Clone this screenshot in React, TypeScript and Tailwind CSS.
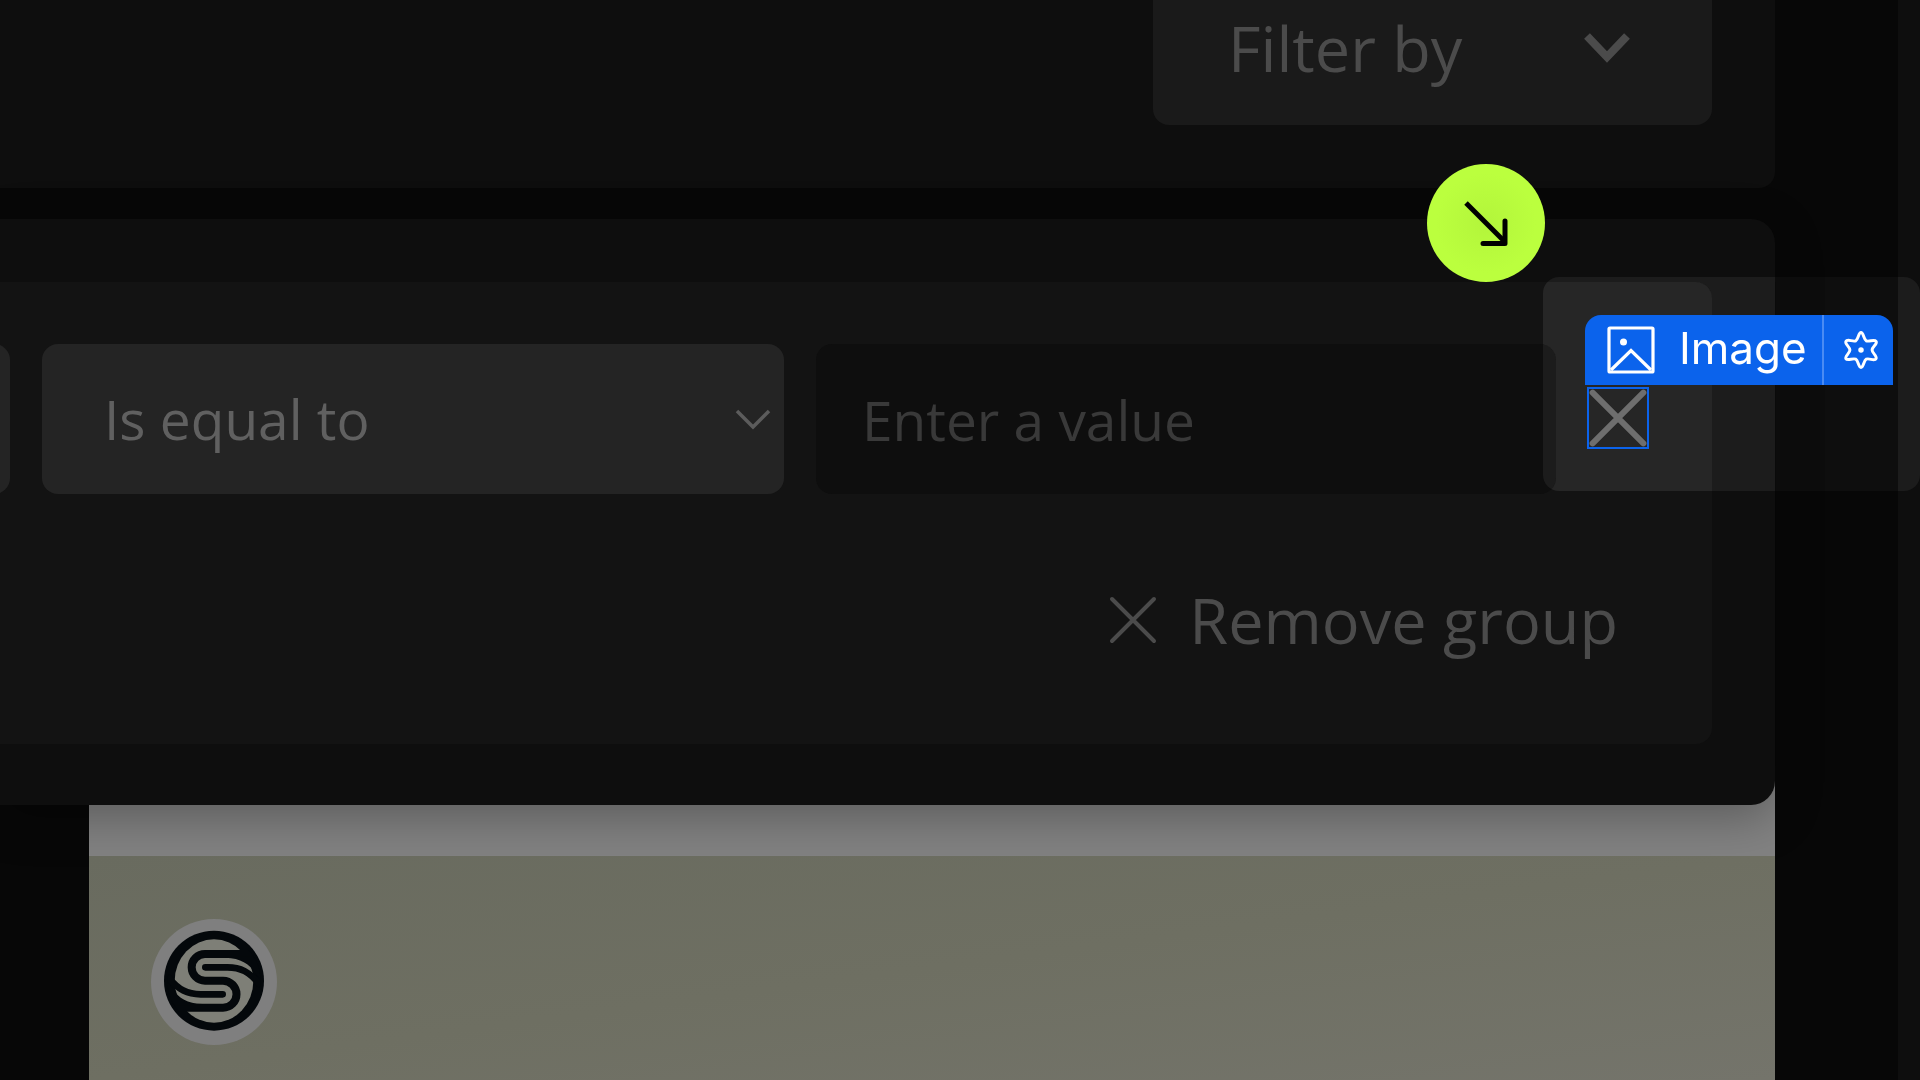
import { useState } from 'react'

const FIELD_CLS = 'h-[150px] w-full rounded-2xl text-[55px] leading-[76px] appearance-none outline-none'

const OPERATORS = [
  { value: 'eq', label: 'Is equal to' },
  { value: 'neq', label: 'Is not equal to' },
]

function Cross({ className, width }: { className: string; width: number }) {
  return (
    <svg viewBox="0 0 48 48" className={className} fill="none" stroke="currentColor" strokeWidth={width} strokeLinecap="round">
      <path d="M3 3 45 45M45 3 3 45" />
    </svg>
  )
}

function Logo() {
  return (
    <svg viewBox="61 56 378 378" className="size-[126px]" role="img" aria-label="Logo">
      <defs>
        <clipPath id="logo-disc">
          <circle cx="250" cy="242" r="140" />
        </clipPath>
      </defs>
      <circle cx="250" cy="245" r="189" fill="#7f7f7f" />
      <circle cx="250" cy="241" r="150" fill="#04080b" />
      <ellipse cx="250" cy="242" rx="118" ry="125" fill="#7e7f77" />
      <g clipPath="url(#logo-disc)" fill="none" stroke="#04080b">
        <path d="M400 161H223A40 40 0 0 0 223 241H277A40.500 40.500 0 0 1 277 322H100" strokeWidth="24" />
        <path d="M224 201H290C330 201 357 215 384 250" strokeWidth="20" strokeLinecap="round" />
        <path d="M276 282H210C170 282 143 268 116 234" strokeWidth="20" strokeLinecap="round" />
        <path d="M285 168H400V250L373 218C356 190 330 174 285 172Z" fill="#04080b" stroke="none" />
        <path d="M215 316H100V234L127 265C144 294 170 309 215 311Z" fill="#04080b" stroke="none" />
      </g>
    </svg>
  )
}

// Blue element label with the selection outline below it
function ImageTag() {
  return (
    <div className="w-[308px]">
      <div className="flex h-[70px] items-stretch rounded-t-2xl bg-[#0b63ec] text-white">
        <div className="flex flex-1 items-center gap-6 pl-[22px]">
          <svg viewBox="0 0 48 48" className="size-12" fill="none" stroke="currentColor" strokeWidth="3.200">
            <rect x="2" y="2" width="44" height="44" rx="1" />
            <path d="M4 44 24 24.500 44 44" />
            <circle cx="16.500" cy="16" r="3.500" fill="currentColor" stroke="none" />
          </svg>
          <span className="pb-1 font-['Inter',sans-serif] text-[44px] leading-[56px]">Image</span>
        </div>
        <button aria-label="Settings" className="flex w-[71px] items-center justify-center border-l-2 border-[#4a8bf3] pl-1">
          <svg viewBox="0 0 36 36" className="size-[38px]" fill="none" stroke="currentColor" strokeWidth="2.800" strokeLinejoin="round">
            <path d="M18 1.500C20.500 1.500 20.500 8 23 9.300S30.500 7.500 32.300 9.800 28.500 15 28.500 18 33.500 23.500 32.300 26.200 25.500 25.400 23 26.700 20.500 34.500 18 34.500 15.500 28 13 26.700 5 28.500 3.700 26.200 7.500 21 7.500 18 2.400 12.500 3.700 9.800 10.500 10.600 13 9.300 15.500 1.500 18 1.500Z" />
            <circle cx="18" cy="18" r="2.600" fill="currentColor" stroke="none" />
          </svg>
        </button>
      </div>
      <button aria-label="Remove condition" className="mt-0.5 ml-0.5 flex size-[62px] items-center justify-center border-2 border-[#0b63ec] text-[#6e6e6e]">
        <Cross className="size-[58px]" width={5} />
      </button>
    </div>
  )
}

export default function App() {
  const [operator, setOperator] = useState('eq')
  const [value, setValue] = useState('')

  return (
    <div className="flex min-h-screen overflow-hidden bg-[#070707] font-['Open_Sans',sans-serif]">
      <main className="flex min-w-0 flex-1 flex-col">
        {/* Toolbar */}
        <header className="flex justify-end rounded-br-2xl bg-[#0e0e0e] pr-[63px] pb-[63px]">
          <button className="flex w-[559px] items-center justify-between rounded-b-2xl bg-[#1a1a1a] pt-4 pr-[82px] pb-[45px] pl-[75px] text-[63px] leading-[64px] text-[#4b4b4b]">
            Filter by
            <svg viewBox="0 0 46 32" className="h-8 w-[46px]" fill="none" stroke="currentColor" strokeWidth="8">
              <path d="M3 4 23 25 43 4" />
            </svg>
          </button>
        </header>

        {/* Filter builder */}
        <section className="relative z-10 mt-[31px] rounded-r-3xl bg-[#0e0e0e] pt-[63px] pr-[63px] pb-[61px] shadow-[0_12px_48px_rgba(0,0,0,0.3)]">
          <div className="relative rounded-r-2xl bg-[#131313] pt-[62px] pb-[92px]">
            <div className="flex justify-end gap-8 pr-[156px]">
              <div className="w-[742px] shrink-0">
                <select aria-label="Field" className={`${FIELD_CLS} bg-[#242424]`} />
              </div>
              <div className="relative w-[742px] shrink-0">
                <select
                  aria-label="Operator"
                  value={operator}
                  onChange={(e) => setOperator(e.target.value)}
                  className={`${FIELD_CLS} bg-[#242424] pr-20 pl-[62px] text-[#606060]`}
                >
                  {OPERATORS.map((o) => (
                    <option key={o.value} value={o.value}>{o.label}</option>
                  ))}
                </select>
                <svg viewBox="0 0 36 22" className="pointer-events-none absolute top-16 right-[13px] h-[22px] w-9" fill="none" stroke="#5c5c5c" strokeWidth="3.500">
                  <path d="M2 3 18 19 34 3" />
                </svg>
              </div>
              <div className="w-[740px] shrink-0">
                <input
                  aria-label="Value"
                  placeholder="Enter a value"
                  value={value}
                  onChange={(e) => setValue(e.target.value)}
                  className={`${FIELD_CLS} bg-[#0e0e0e] px-[46px] text-[#606060] placeholder:text-[#393939]`}
                />
              </div>
            </div>
            <div className="mt-[94px] flex justify-end pr-[94px]">
              <button className="flex items-center gap-8 text-[63px] leading-[64px] text-[#4b4b4b]">
                <Cross className="size-12" width={4} />
                Remove group
              </button>
            </div>

            {/* Highlighted area round the selected element */}
            <div className="absolute -top-[5px] -right-[208px] h-[214px] w-[377px] rounded-2xl pt-[38px] pl-[42px] backdrop-brightness-200">
              <ImageTag />
            </div>

            {/* Arrow marker */}
            <div className="absolute -top-[118px] right-[167px] flex size-[118px] items-center justify-center rounded-full bg-radial from-[#b3f53b] to-[#bbff3e] to-60%">
              <svg viewBox="0 0 118 118" className="size-full" fill="none" stroke="#000" strokeWidth="5">
                <path d="M39 39 77 77" />
                <path d="M78 57V79.500H56" strokeLinecap="round" strokeLinejoin="round" />
              </svg>
            </div>
          </div>
        </section>

        {/* Card below the builder */}
        <article className="-mt-6 ml-[89px] flex flex-1 flex-col bg-[#828282] pt-[75px]">
          <div className="relative z-20 flex-1 bg-linear-to-br from-[#696b5f] via-[#6e6f62] to-[#74746b] px-[62px] pt-[63px] pb-[35px]">
            <Logo />
          </div>
        </article>
      </main>
      <aside className="ml-[123px] w-[22px] bg-[#0e0e0e]" />
    </div>
  )
}
